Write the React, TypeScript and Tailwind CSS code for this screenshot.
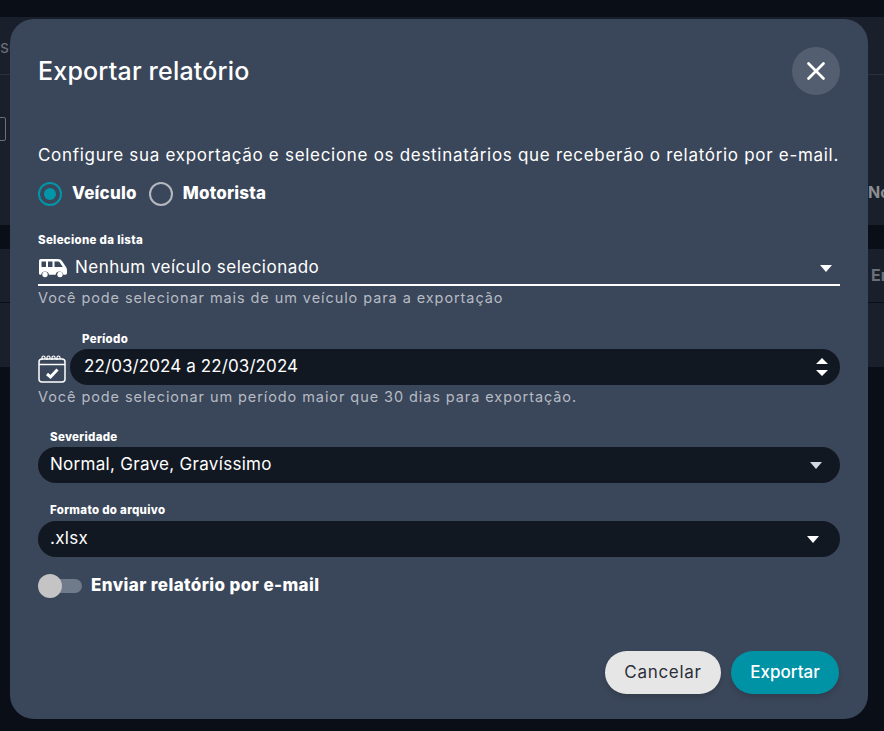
import { X } from 'lucide-react';

const font = "font-['Inter','Noto_Sans',sans-serif]";
const helper = 'text-[14.5px] leading-[18px] tracking-[0.92px] text-[#b6bbc4]';
const label = 'text-[11.5px] leading-[14px] font-extrabold tracking-[0.3px] text-white';

function Caret({ className }: { className?: string }) {
  return (
    <svg className={className} width="14" height="7" viewBox="0 0 14 7" fill="currentColor">
      <path d="M1 0h12L7 7z" />
    </svg>
  );
}

function PillSelect({ title, value, caret, gap }: { title: string; value: string; caret: string; gap: string }) {
  return (
    <div>
      <div className={`pl-3 ${label}`}>{title}</div>
      <div className={`${gap} h-9 rounded-[18px] bg-[#111822] pl-3 flex items-center justify-between text-white text-[17px] tracking-[0.3px]`}>
        <span>{value}</span>
        <Caret className={caret} />
      </div>
    </div>
  );
}

export default function App() {
  return (
    <div className={`relative h-[731px] w-full overflow-hidden bg-[#0a0e17] ${font}`}>
      {/* page behind the dialog */}
      <div className="absolute inset-x-0 top-[17px] h-[208px] bg-[#1a202b]" />
      <div className="absolute inset-x-0 top-[249px] h-[53px] bg-[#1a202b]" />
      <div className="absolute inset-x-0 top-[303px] h-[64px] bg-[#1a202b]" />
      <div className="absolute inset-x-0 top-[74px] h-px bg-[#2b313c]" />
      <span className="absolute left-0 top-[35px] text-[17px] text-[#6b7078]">so</span>
      <span className="absolute left-[-3px] top-[117px] h-6 w-[9px] rounded-[2px] border border-[#6b7078]" />
      <span className="absolute left-[868px] top-[180px] text-[16px] font-bold text-[#8a8d92]">No</span>
      <span className="absolute left-[871px] top-[263px] text-[16px] font-bold text-[#6b7078]">En</span>

      {/* dialog */}
      <div className="absolute left-[10px] top-[19px] w-[858px] h-[700px] rounded-[24px] bg-[#3a4659] px-7 flex flex-col">
        <div className="flex items-center justify-between pt-7">
          <h2 className="text-[25px] leading-[48px] font-medium tracking-[0.2px] text-white">Exportar relatório</h2>
          <button className="size-12 rounded-full bg-[#535e70] flex items-center justify-center text-white">
            <X size={30} strokeWidth={2.2} />
          </button>
        </div>

        <p className="mt-[48px] text-[17px] leading-6 tracking-[0.7px] text-white whitespace-nowrap">
          Configure sua exportação e selecione os destinatários que receberão o relatório por e-mail.
        </p>

        <div className="mt-[15px] flex items-center h-6 text-white text-[17px] font-extrabold tracking-[0.2px]">
          <span className="size-6 rounded-full border-2 border-[#0096a8] flex items-center justify-center">
            <span className="size-3 rounded-full bg-[#0096a8]" />
          </span>
          <span className="ml-[10px]">Veículo</span>
          <span className="ml-3 size-6 rounded-full border-2 border-[#b4b8bf]" />
          <span className="ml-[10px]">Motorista</span>
        </div>

        <div className={`mt-[27px] ${label}`}>Selecione da lista</div>
        <div className="mt-[2px] h-[37px] border-b-2 border-white flex items-center justify-between pr-[7px] pt-[3px] text-white">
          <div className="flex items-center gap-2">
            <svg width="29" height="20" viewBox="0 0 29 20" fill="currentColor">
              <path fillRule="evenodd" d="M3 1h17c2 0 3 .7 4 2l4 6c.6 1 1 1.8 1 3v3c0 1-.6 1.7-1.6 1.7h-2a4 4 0 0 0-7.8 0H11a4 4 0 0 0-7.8 0H2.400C1 16.700 1 16 1 15V3c0-1.300.8-2 2-2zM3.500 3.500V9H8V3.500zM10 3.500V9h4.500V3.500zM16.500 3.500V9h8.300l-3-4.500c-.4-.6-1-1-1.800-1z" />
              <circle cx="7" cy="16.500" r="2.700" />
              <circle cx="22" cy="16.500" r="2.700" />
            </svg>
            <span className="text-[17px] tracking-[0.48px]">Nenhum veículo selecionado</span>
          </div>
          <Caret />
        </div>
        <p className={`mt-[3px] ${helper}`}>Você pode selecionar mais de um veículo para a exportação</p>

        <div className="mt-[25px] flex items-end gap-[4px]">
          <svg className="mb-[2px] shrink-0" width="28" height="28" viewBox="0 0 28 28" fill="none" stroke="white" strokeWidth="1.500">
            <rect x="1" y="4" width="26" height="23" rx="3" />
            <path d="M1 9.500h26" />
            <path d="M4 5V2.500a1.500 1.500 0 0 1 3 0V4M9 5V2.500a1.500 1.500 0 0 1 3 0V4M14 5V2.500a1.500 1.500 0 0 1 3 0V4M19 5V2.500a1.500 1.500 0 0 1 3 0V4" strokeWidth="1.200" />
            <path d="M9 19l3.500 3L19.500 14.500" strokeWidth="3" />
          </svg>
          <div className="flex-1">
            <div className={`pl-3 ${label}`}>Período</div>
            <div className="mt-[3px] h-9 rounded-[18px] bg-[#111822] pl-[14px] pr-3 flex items-center justify-between text-white text-[17px] tracking-[0.1px]">
              <span>22/03/2024 a 22/03/2024</span>
              <svg width="12" height="18" viewBox="0 0 12 18" fill="white">
                <path d="M6 0l6 6H0zM0 12h12l-6 6z" />
              </svg>
            </div>
          </div>
        </div>
        <p className={`mt-[3px] ${helper}`}>Você pode selecionar um período maior que 30 dias para exportação.</p>

        <div className="mt-[24px]">
          <PillSelect title="Severidade" value="Normal, Grave, Gravíssimo" gap="mt-[3px]" caret="mr-[17px] text-[#d5d8dc]" />
        </div>
        <div className="mt-[20px]">
          <PillSelect title="Formato do arquivo" value=".xlsx" gap="mt-[4px]" caret="mr-[20px]" />
        </div>

        <div className="mt-[16px] flex items-center">
          <span className="relative w-11 h-[14px]">
            <span className="absolute inset-y-0 left-[2px] right-0 rounded-full bg-[#6f7a8b]" />
            <span className="absolute left-0 top-[-5px] size-6 rounded-full bg-[#c4c4c4]" />
          </span>
          <span className="ml-[9px] text-[17px] font-extrabold tracking-[0.4px] text-white">Enviar relatório por e-mail</span>
        </div>

        <div className="mt-auto mb-[25px] flex justify-end gap-[10px] pr-px">
          <button className="h-[43px] w-[116px] rounded-full bg-[#e6e6e6] text-[#2a2f3a] text-[17px] tracking-[0.7px] shadow-md">Cancelar</button>
          <button className="h-[43px] w-[108px] rounded-full bg-[#0093a6] text-white text-[17px] font-medium shadow-md">Exportar</button>
        </div>
      </div>
    </div>
  );
}
